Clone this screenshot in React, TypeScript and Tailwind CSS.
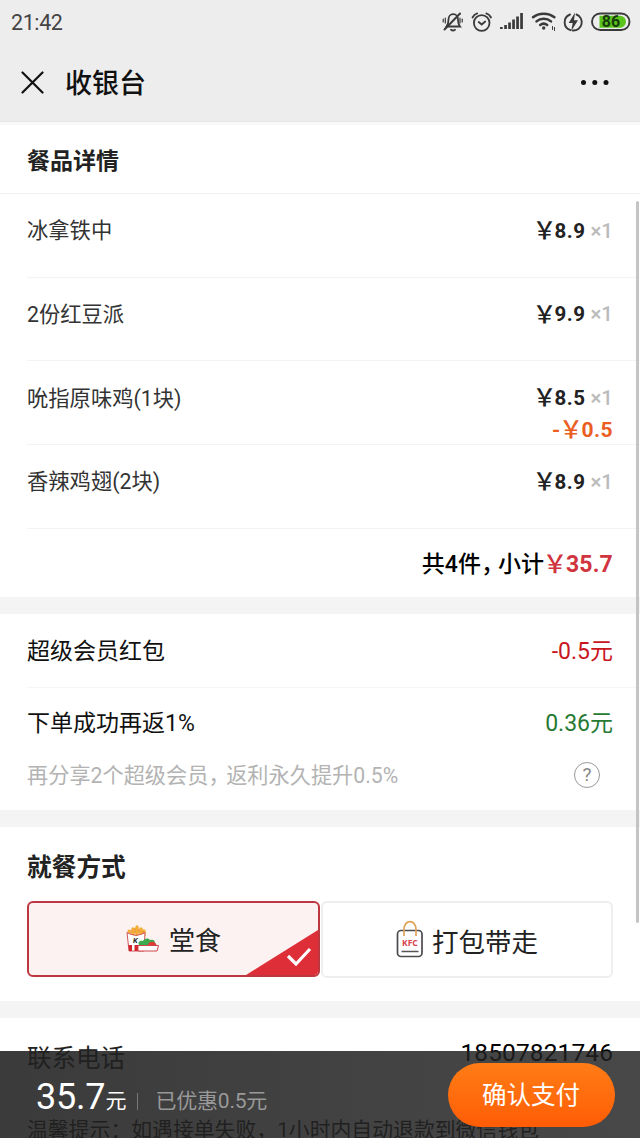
import React from "react";

const SANS = "font-['Roboto','Noto_Sans_CJK_SC',sans-serif]";

function StatusIcons() {
  return (
    <svg width="192" height="26" viewBox="0 0 192 26" fill="none" stroke="#3a3a3a" strokeWidth="1.8" strokeLinecap="round">
      <path d="M5.500 17.500h13.500c-1.700-2-2-4-2-7 0-3-1.800-5.300-4.800-5.300s-4.700 2.300-4.700 5.300c0 3-.4 5-2 7zM10 20.700c1 .8 3 .8 4 0" />
      <path d="M3.500 20.500 19 4.500" strokeWidth="2" />
      <path d="M4.300 9v5M2.200 10v3M19 9v5M21.200 10v3" strokeWidth="1.200" />
      <circle cx="40.700" cy="14" r="7.800" />
      <path d="m37.700 13 3 2.500 3.500-3M31.500 8.500c1-2 2.500-3.400 4.700-4.100M50 8.500c-1-2-2.500-3.400-4.700-4.100" />
      <g fill="#3a3a3a" stroke="none">
        <path d="M59 18h2.700v2H59zM63.200 16h2.700v4h-2.700zM67.200 13.500h2.700V20h-2.700zM71.200 10.500h2.700V20h-2.700zM75.200 7.500h2.700V20h-2.700zM79.200 4h2.700v16h-2.700z" />
      </g>
      <path d="M92 8.300c5.700-4.900 15.700-4.900 21.400 0M95.500 12.400c4-3.400 10.500-3.400 14.500 0M99.200 16c2-1.600 5-1.600 7 0" strokeWidth="2.500" />
      <circle cx="102.700" cy="19" r="1.700" fill="#3a3a3a" stroke="none" />
      <path d="M111.500 17.500v3M113.500 18.500v3" strokeWidth="1" />
      <path d="M129.500 21.200A8.300 8.300 0 0 1 129 5.500M135.500 5.500a8.300 8.300 0 0 1-3.700 16" strokeWidth="1.900" />
      <path d="m134 3.500-6.300 10.500h4l-1.500 8 6.800-10.700h-4z" fill="#3a3a3a" stroke="none" />
      <rect x="151" y="4.500" width="37.500" height="16.500" rx="8.200" strokeWidth="1.900" />
      <path d="M158.500 6.700h20.500a6 6 0 0 1 0 12H158.500z" fill="#5ac41d" stroke="none" />
    </svg>
  );
}

function Yen({ className = "" }: { className?: string }) {
  return (
    <span className={`flex justify-center whitespace-nowrap pb-[4px] font-['Noto_Sans_CJK_SC',sans-serif] font-medium tracking-normal ${className}`}>
      ￥
    </span>
  );
}

function Item({ name, price, off }: { name: string; price: string; off?: string }) {
  return (
    <div className="ml-[27px] h-[83.7px] shrink-0 border-b border-[#f3f3f3] pr-[27px] pt-[21px]">
      <div className="flex h-8 items-center justify-between">
        <span className="text-[21.300px] text-[#333]">{name}</span>
        <span className="flex items-center text-[20.500px] font-bold text-[#222]">
          <Yen className="w-[20px] text-[24px]" />
          <span className="tracking-[0.500px]">{price}</span>
          <span className="ml-[5px] font-medium text-[#bbb]">×1</span>
        </span>
      </div>
      {off && (
        <div className="flex h-8 items-center justify-end text-[21px] font-bold tracking-[0.400px] text-[#eb5d20]">
          <span>-</span>
          <Yen className="w-[21px] text-[24px]" />
          {off}
        </div>
      )}
    </div>
  );
}

function MealIcon() {
  return (
    <svg width="34" height="28" viewBox="0 0 34 28">
      <path d="M3 10V6" stroke="#f5ad35" strokeWidth="3" strokeLinecap="round" />
      <path d="M7 10V4M11 10V2M15 10V4M18 10V6" stroke="#f5ad35" strokeWidth="3.400" strokeLinecap="round" />
      <path d="M5 5v3M9 3v5M13 4v4M17 6v2" stroke="#e0851c" />
      <path d="m1 7.500 3 1.500q6 3 12 0l3-1.500L18 26H3z" fill="#fff" stroke="#d0545a" strokeWidth="1" />
      <path d="M2.500 20h3.500v6H3zM8.500 20h3.500v6H8.500z" fill="#d3252e" />
      <text x="7" y="17.500" fontSize="7.500" fontWeight="bold" fontStyle="italic" fill="#222">K</text>
      <path d="M13 20c-1.500-3 1-5 4-4 1-3 6-3.500 7-1 3-1 5 0 5 3l1 2z" fill="#3caa50" />
      <path d="M22 20c.5-4 7-4.500 8.500 0z" fill="#df3c35" />
      <path d="M12 20.500h20.500L31 26H12z" fill="#fff" stroke="#cf4448" />
    </svg>
  );
}

function BagIcon() {
  return (
    <svg width="28" height="38" viewBox="0 0 28 38" fill="none">
      <rect x="1.500" y="10.500" width="24.500" height="26" rx="3.500" stroke="#4b4b50" strokeWidth="1.700" />
      <path d="M8 16V9.500c0-10.500 12-10.500 12 0V16" stroke="#dca45a" strokeWidth="1.700" />
      <text x="13.900" y="25.500" textAnchor="middle" fontSize="8.500" fontWeight="bold" fill="#d8404c" fontFamily="Open Sans">KFC</text>
      <path d="M5.500 31.500h17" stroke="#555" strokeWidth="1.500" />
    </svg>
  );
}

const items = [
  { name: "冰拿铁中", price: "8.9" },
  { name: "2份红豆派", price: "9.9" },
  { name: "吮指原味鸡(1块)", price: "8.5", off: "0.5" },
  { name: "香辣鸡翅(2块)", price: "8.9" },
];

export default function App() {
  return (
    <div className={`relative flex h-[1138px] w-[640px] flex-col overflow-hidden bg-white leading-none ${SANS}`}>
      <header className="flex h-[122px] shrink-0 flex-col border-b border-[#e6e6e6] bg-[#ededed]">
        <div className="flex h-[44px] items-center justify-between pl-[11px] pr-[7px]">
          <span className="pt-px text-[21.500px] tracking-[-0.400px] text-[#444]">21:42</span>
          <div className="relative">
            <StatusIcons />
            <span className="absolute left-[151px] top-[5px] w-[38px] text-center text-[16px] font-bold text-[#173c0b]">86</span>
          </div>
        </div>
        <div className="flex h-[77px] items-center pl-[21px] pr-[31px]">
          <svg width="23" height="23" viewBox="0 0 23 23" stroke="#111" strokeWidth="2.200" strokeLinecap="round">
            <path d="m1.500 1.500 20 20M21.500 1.500l-20 20" />
          </svg>
          <h1 className="ml-[21px] pt-[4px] text-[27px] font-medium text-[#111]">收银台</h1>
          <svg className="ml-auto" width="29" height="6" viewBox="0 0 29 6" fill="#111">
            <circle cx="3.500" cy="2.500" r="2.500" />
            <circle cx="14.800" cy="2.500" r="2.500" />
            <circle cx="26" cy="2.500" r="2.500" />
          </svg>
        </div>
      </header>
      <div className="h-[3px] shrink-0 bg-[#f8f8f8]" />

      <h2 className="flex h-[69px] shrink-0 items-center border-b border-[#f0f0f0] pl-[27px] pt-[4px] text-[23px] font-bold text-[#222]">餐品详情</h2>
      {items.map((i) => (
        <Item key={i.name} {...i} />
      ))}
      <div className="flex h-[68px] shrink-0 items-center justify-end pr-[27px] pt-[3px] text-[23px] font-medium text-black">
        <span>共4件<span className="tracking-[-6px]">，</span>小计</span>
        <span className="flex items-center font-bold text-[#d0343e]">
          <Yen className="w-[22px] text-[25px]" />
          <span className="tracking-[0.200px]">35.7</span>
        </span>
      </div>

      <div className="h-[17px] shrink-0 bg-[#f4f4f4]" />
      <div className="ml-[27px] flex h-[74px] shrink-0 items-center justify-between border-b border-[#f5f5f5] pr-[27px] pt-[3px] text-[23px]">
        <span className="text-[#111]">超级会员红包</span>
        <span className="text-[#c8161d]">-0.5元</span>
      </div>
      <div className="flex h-[122px] shrink-0 flex-col px-[27px]">
        <div className="flex h-[69px] items-center justify-between pt-[2px] text-[23px]">
          <span className="text-[#111]">下单成功再返1%</span>
          <span className="text-[#267a32]">0.36元</span>
        </div>
        <div className="flex h-[36px] items-center justify-between text-[21.200px] text-[#b3b3b3]">
          <span className="pt-[2px]">再分享2个超级会员<span className="tracking-[-3.500px]">，</span>返利永久提升0.5%</span>
          <span className="mr-[13px] flex size-[26px] items-center justify-center rounded-full border-[1.500px] border-[#999] text-[19px] text-[#888]">?</span>
        </div>
      </div>

      <div className="h-[17px] shrink-0 bg-[#f4f4f4]" />
      <section className="flex h-[174px] shrink-0 flex-col px-[27px]">
        <h2 className="flex h-[74px] items-center pt-[10px] text-[24.700px] font-bold text-[#222]">就餐方式</h2>
        <div className="flex">
          <div className="relative flex h-[76px] w-[293px] items-center overflow-hidden rounded-[6px] border-2 border-[#bd3740] bg-[#fdf2f2]">
            <span className="ml-[97px] flex items-center gap-[9px] text-[26px] text-[#222]">
              <MealIcon />
              <span className="pt-[4px]">堂食</span>
            </span>
            <svg className="absolute bottom-0 right-0" width="72" height="45" viewBox="0 0 72 45">
              <path d="M72 0v45H0z" fill="#de2f38" />
              <path d="m42 26 8 8 14-15" fill="none" stroke="#fff" strokeWidth="3.200" />
            </svg>
          </div>
          <div className="ml-px flex h-[77px] w-[292px] items-center rounded-[6px] border-2 border-[#eee] pl-[73px]">
            <BagIcon />
            <span className="ml-[8px] pt-[7px] text-[26.500px] text-[#222]">打包带走</span>
          </div>
        </div>
      </section>

      <div className="h-[17px] shrink-0 bg-[#f4f4f4]" />
      <div className="flex h-[78px] shrink-0 items-center justify-between px-[27px] text-[24.500px] text-[#222]">
        <span className="pt-[4px]">联系电话</span>
        <span className="pb-[8px] tracking-[0.100px] text-black">18507821746</span>
      </div>
      <p className="flex h-[42px] shrink-0 items-end whitespace-nowrap pl-[27px] text-[20.850px] text-[#222]">
        <span className="h-[18px]">温馨提示：如遇接单失败，1小时内自动退款到微信钱包</span>
      </p>

      <div className="absolute right-[1px] top-[201px] h-[722px] w-[3px] rounded-full bg-[#c4c4c4]" />

      <footer className="absolute bottom-0 left-0 flex h-[87px] w-full items-center bg-gradient-to-r from-[#202020]/88 to-[#202020]/82 pl-[36px] pr-[25px]">
        <span className="pt-[5px] text-[36px] tracking-[-0.200px] text-white">35.7</span>
        <span className="mt-[13px] text-[21px] text-white">元</span>
        <span className="ml-[11px] mt-[14px] h-[17px] w-px bg-[#777]" />
        <span className="ml-[17px] mt-[14px] text-[21px] tracking-[-0.200px] text-[#999]">已优惠0.5元</span>
        <button className="ml-auto flex h-[64px] w-[167px] items-center justify-center rounded-full bg-gradient-to-b from-[#ff7c15] to-[#ff5c05] pr-px pt-[4px] text-[24.500px] text-white">确认支付</button>
      </footer>
    </div>
  );
}
